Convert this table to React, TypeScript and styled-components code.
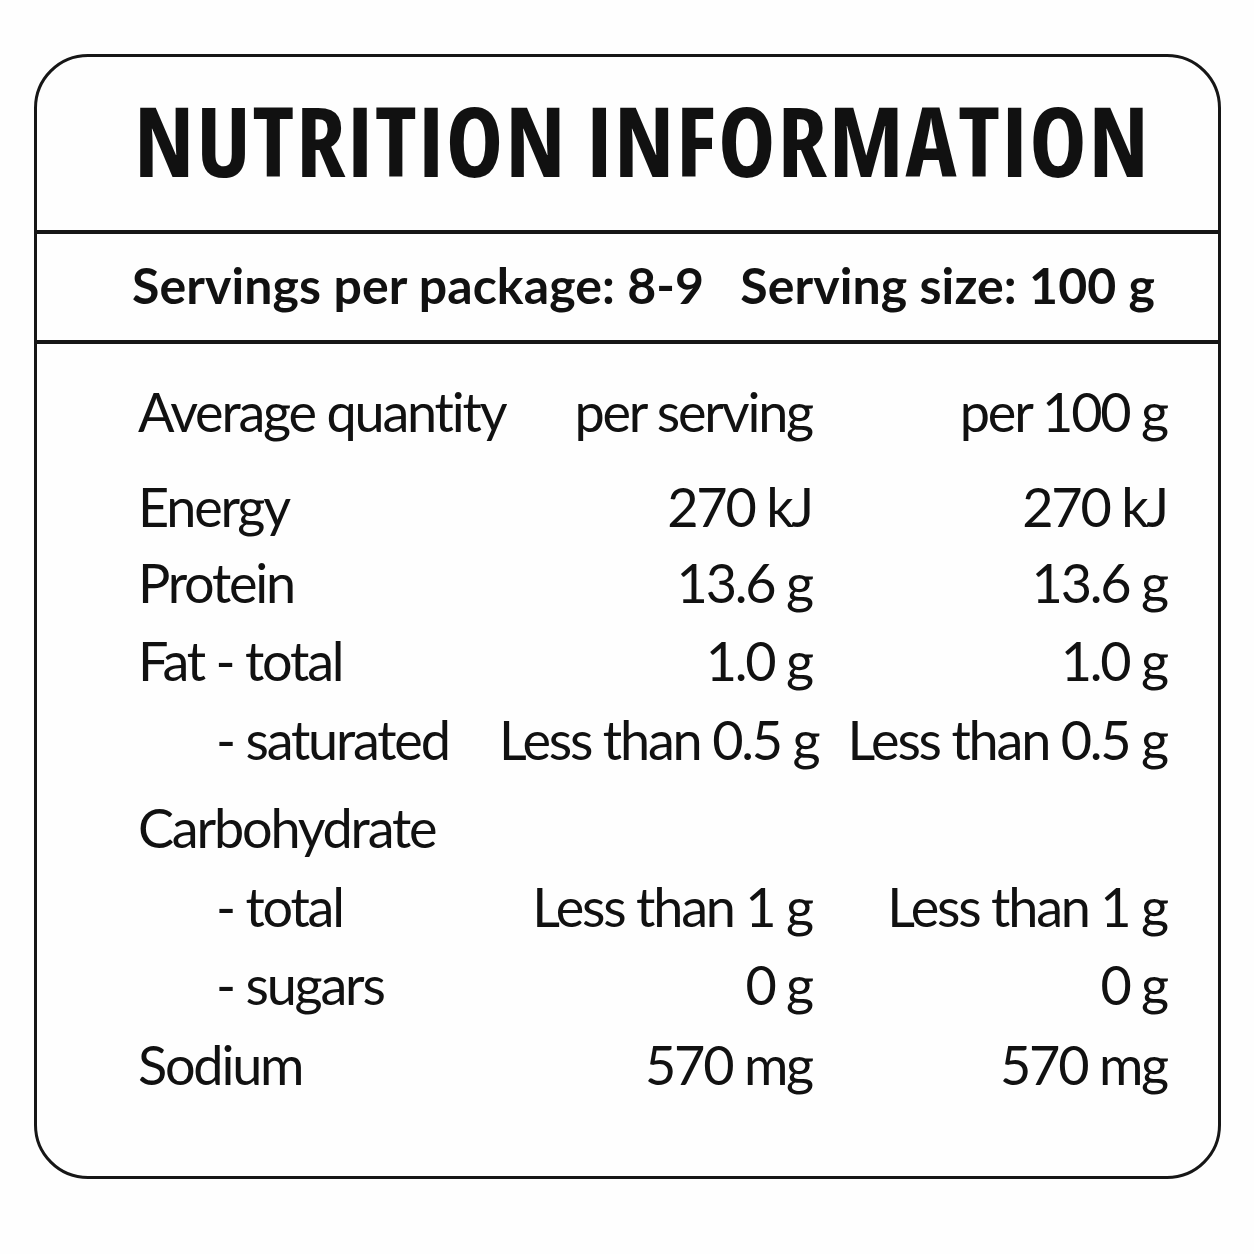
import React from "react";
import styled, { createGlobalStyle } from "styled-components";

const Global = createGlobalStyle`
  html, body { margin: 0; padding: 0; background: #fefefe; }
  body { font-family: Lato, "Liberation Sans", sans-serif; color: #111; }
`;

const Page = styled.div`
  width: 1254px;
  height: 1254px;
  padding: 54px 0 0 34px;
  box-sizing: border-box;
`;

const Card = styled.div`
  width: 1187px;
  height: 1125px;
  box-sizing: border-box;
  border: 3px solid #161616;
  border-radius: 54px;
  display: flex;
  flex-direction: column;
  overflow: hidden;
`;

const TitleBar = styled.div`
  height: 177px;
  border-bottom: 4px solid #161616;
  display: flex;
  align-items: center;
  padding: 0 0 8px 97px;
  box-sizing: border-box;
`;

const Title = styled.h1`
  margin: 0;
  font-family: "Open Sans", Lato, sans-serif;
  font-stretch: 80%;
  font-weight: 700;
  font-size: 97px;
  letter-spacing: 1.8px;
  line-height: 1;
  white-space: nowrap;
`;

const ServingBar = styled.div`
  height: 110px;
  border-bottom: 4px solid #161616;
  display: flex;
  align-items: center;
  gap: 36px;
  padding: 0 0 5px 95px;
  box-sizing: border-box;
  font-family: Lato, "Liberation Sans", sans-serif;
  font-weight: 700;
  font-size: 50px;
  letter-spacing: 0.1px;
  white-space: nowrap;
`;

const Table = styled.div`
  padding: 28px 0 0 101px;
  display: flex;
  flex-direction: column;
`;

const Row = styled.div<{ $h: number }>`
  display: grid;
  grid-template-columns: 361px 313px 355px;
  height: ${(p) => p.$h}px;
  line-height: 79px;
  font-size: 54px;
  letter-spacing: -2.2px;
  white-space: nowrap;
`;

const Label = styled.div<{ $indent?: boolean }>`
  padding-left: ${(p) => (p.$indent ? 78 : 0)}px;
`;

const Value = styled.div`
  text-align: right;
`;

type R = { label: string; a: string; b: string; indent?: boolean; h: number };

const rows: R[] = [
  { label: "Average quantity", a: "per serving", b: "per 100 g", h: 95 },
  { label: "Energy", a: "270 kJ", b: "270 kJ", h: 76 },
  { label: "Protein", a: "13.6 g", b: "13.6 g", h: 78 },
  { label: "Fat - total", a: "1.0 g", b: "1.0 g", h: 79 },
  { label: "- saturated", a: "Less than 0.5 g", b: "Less than 0.5 g", indent: true, h: 88 },
  { label: "Carbohydrate", a: "", b: "", h: 79 },
  { label: "- total", a: "Less than 1 g", b: "Less than 1 g", indent: true, h: 78 },
  { label: "- sugars", a: "0 g", b: "0 g", indent: true, h: 80 },
  { label: "Sodium", a: "570 mg", b: "570 mg", h: 79 },
];

export default function App() {
  return (
    <Page>
      <Global />
      <Card>
        <TitleBar>
          <Title>NUTRITION INFORMATION</Title>
        </TitleBar>
        <ServingBar>
          <span>Servings per package: 8-9</span>
          <span>Serving size: 100 g</span>
        </ServingBar>
        <Table>
          {rows.map((r) => (
            <Row key={r.label} $h={r.h}>
              <Label $indent={r.indent}>{r.label}</Label>
              <Value>{r.a}</Value>
              <Value>{r.b}</Value>
            </Row>
          ))}
        </Table>
      </Card>
    </Page>
  );
}
